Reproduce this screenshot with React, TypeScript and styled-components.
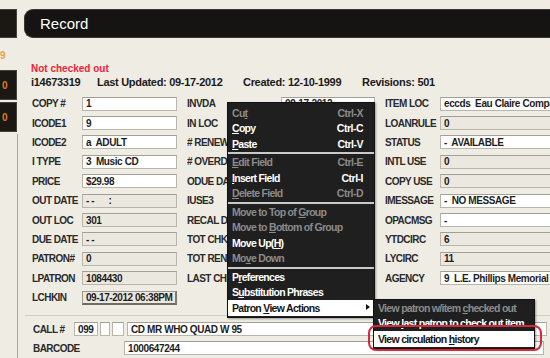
import React from "react";
import styled, { createGlobalStyle } from "styled-components";

const GlobalStyle = createGlobalStyle`
  html, body {
    margin: 0;
    padding: 0;
  }
  body {
    width: 550px;
    height: 358px;
    overflow: hidden;
    background: #efece4;
    font-family: "Liberation Sans", Arial, sans-serif;
  }
`;

const sans = `"Liberation Sans", Arial, sans-serif`;

const Screen = styled.div`
  position: relative;
  display: flex;
  width: 550px;
  height: 358px;
  overflow: hidden;
  background: #efece4;
`;

const Sidebar = styled.aside`
  width: 18px;
  flex: none;
  display: flex;
  flex-direction: column;
  padding-top: 9px;
  box-sizing: border-box;
`;

const SideTile = styled.div<{ $h: number }>`
  height: ${(p) => p.$h}px;
  width: 17px;
  box-sizing: border-box;
  margin-bottom: 2px;
  padding-left: 2px;
  display: flex;
  align-items: center;
  background: #1b1713;
  border: 1px solid #45413b;
  border-left: none;
  color: #dc7d1c;
  font: bold 10px ${sans};
`;

const SideCount = styled.div`
  height: 30px;
  display: flex;
  align-items: center;
  color: #eaa04c;
  font: bold 10px ${sans};
`;

const SideRest = styled.div`
  flex: 1;
  width: 17px;
  border-right: 1px solid #aaa69c;
`;

const Main = styled.main`
  flex: 1;
  min-width: 0;
  display: flex;
  flex-direction: column;
  padding: 9px 0 0 6px;
`;

const Header = styled.header`
  height: 29px;
  flex: none;
  display: flex;
  align-items: center;
  padding-left: 15px;
  background: #151412;
  border: 1px solid #3a3733;
  border-right: none;
  border-radius: 9px 0 0 9px;
  box-sizing: border-box;
  color: #fff;
  font: 15px ${sans};
`;

const Content = styled.section`
  padding: 24px 0 0 7px;
  display: flex;
  flex-direction: column;
`;

const Status = styled.div`
  height: 13px;
  color: #ee1f3b;
  font: bold 10px/13px ${sans};
`;

const MetaLine = styled.div`
  display: flex;
  height: 14px;
  color: #1b1b1b;
  font: bold 11px/14px ${sans};
  letter-spacing: -0.3px;
  white-space: nowrap;
`;

const MetaItem = styled.span<{ $w?: number }>`
  ${(p) => (p.$w ? `width: ${p.$w}px; flex: none;` : "")}
`;

const FormGrid = styled.div`
  display: flex;
  gap: 10px;
  margin-top: 5px;
  padding-left: 1px;
`;

const Column = styled.div<{ $w: number }>`
  width: ${(p) => p.$w}px;
  flex: none;
  display: flex;
  flex-direction: column;
`;

const FieldRow = styled.div<{ $label: number }>`
  height: 19.4px;
  display: grid;
  grid-template-columns: ${(p) => p.$label}px 1fr;
  align-items: center;
`;

const Label = styled.span`
  color: #2a2a2a;
  font: bold 10px ${sans};
  letter-spacing: -0.55px;
  white-space: nowrap;
  overflow: hidden;
`;

type BoxKind = "edit" | "read" | "stamp";

const Box = styled.div<{ $kind?: BoxKind; $w?: number }>`
  height: 14px;
  box-sizing: border-box;
  ${(p) => (p.$w ? `width: ${p.$w}px; flex: none;` : "")}
  padding: 0 3px;
  display: flex;
  align-items: center;
  background: ${(p) => (p.$kind === "edit" ? "#ffffff" : "#ebe8e0")};
  border: 1px solid #b8b5ac;
  border-top-color: #a29f97;
  ${(p) =>
    p.$kind === "stamp"
      ? "border-color: #9c998f #7d7a72 #6f6c65 #9c998f; border-width: 1px 2px 2px 1px;"
      : ""}
  color: #1d1d1d;
  font: bold 10px ${sans};
  letter-spacing: ${(p) => (p.$kind === "stamp" ? "-0.45px" : "-0.4px")};
  white-space: pre;
  overflow: hidden;
`;

const BottomSection = styled.div`
  margin-top: 8px;
  margin-left: -6px;
  padding: 6px 0 0 8px;
  border-top: 1px solid #cfcbc1;
  display: flex;
  flex-direction: column;
  gap: 5px;
`;

const InlineRow = styled.div`
  display: flex;
  align-items: center;
  gap: 2px;
`;

const InlineLabel = styled(Label)<{ $w: number }>`
  width: ${(p) => p.$w}px;
  flex: none;
`;

const Menu = styled.div<{ $left: number; $top: number; $w: number; $pad: number }>`
  position: absolute;
  left: ${(p) => p.$left}px;
  top: ${(p) => p.$top}px;
  width: ${(p) => p.$w}px;
  box-sizing: border-box;
  padding: ${(p) => p.$pad}px 0 1px;
  background: #1f1f1f;
  border: 1px solid #111;
  box-shadow: 1px 1px 2px rgba(0, 0, 0, 0.35);
`;

const MenuItem = styled.div<{ $disabled?: boolean; $active?: boolean }>`
  position: relative;
  height: 15.5px;
  display: flex;
  align-items: center;
  justify-content: space-between;
  padding: 0 11px 0 4px;
  background: ${(p) => (p.$active ? "#ffffff" : "transparent")};
  color: ${(p) => (p.$active ? "#151515" : p.$disabled ? "#8b8b8b" : "#ffffff")};
  font: bold 10.5px ${sans};
  letter-spacing: -0.7px;
  white-space: nowrap;
  u {
    text-underline-offset: 1px;
  }
`;

const Shortcut = styled.span`
  letter-spacing: -0.5px;
`;

const Separator = styled.div`
  height: 2px;
  margin: 0.5px 0;
  background: #c9c9c9;
`;

const Arrow = styled.span`
  position: absolute;
  right: 4px;
  top: 4px;
  width: 0;
  height: 0;
  border-top: 3.5px solid transparent;
  border-bottom: 3.5px solid transparent;
  border-left: 4px solid #111;
`;

const Callout = styled.div`
  position: absolute;
  left: 368px;
  top: 325px;
  width: 174px;
  height: 26px;
  box-sizing: border-box;
  border: 2px solid #d52a3b;
  border-radius: 8px;
  pointer-events: none;
`;

type Field = { label: string; value: string; kind: BoxKind };

const col1: Field[] = [
  { label: "COPY #", value: "1", kind: "edit" },
  { label: "ICODE1", value: "9", kind: "edit" },
  { label: "ICODE2", value: "a  ADULT", kind: "edit" },
  { label: "I TYPE", value: "3  Music CD", kind: "edit" },
  { label: "PRICE", value: "$29.98", kind: "edit" },
  { label: "OUT DATE", value: "- -      :", kind: "read" },
  { label: "OUT LOC", value: "301", kind: "read" },
  { label: "DUE DATE", value: "- -", kind: "read" },
  { label: "PATRON#", value: "0", kind: "read" },
  { label: "LPATRON", value: "1084430", kind: "read" },
  { label: "LCHKIN", value: "09-17-2012 06:38PM", kind: "stamp" },
];

const col2: Field[] = [
  { label: "INVDA", value: "09-17-2012", kind: "edit" },
  { label: "IN LOC", value: "0", kind: "read" },
  { label: "# RENEWALS", value: "0", kind: "read" },
  { label: "# OVERDUE", value: "0", kind: "read" },
  { label: "ODUE DATE", value: "- -", kind: "read" },
  { label: "IUSE3", value: "0", kind: "read" },
  { label: "RECAL DATE", value: "- -", kind: "read" },
  { label: "TOT CHKOUT", value: "11", kind: "read" },
  { label: "TOT RENEW", value: "0", kind: "read" },
  { label: "LAST CHKIN", value: "09-17-2012", kind: "read" },
];

const col3: Field[] = [
  { label: "ITEM LOC", value: "eccds  Eau Claire Compact Disc", kind: "edit" },
  { label: "LOANRULE", value: "0", kind: "read" },
  { label: "STATUS", value: "-  AVAILABLE", kind: "edit" },
  { label: "INTL USE", value: "0", kind: "read" },
  { label: "COPY USE", value: "0", kind: "read" },
  { label: "IMESSAGE", value: "-  NO MESSAGE", kind: "edit" },
  { label: "OPACMSG", value: "-", kind: "edit" },
  { label: "YTDCIRC", value: "6", kind: "read" },
  { label: "LYCIRC", value: "11", kind: "read" },
  { label: "AGENCY", value: "9  L.E. Phillips Memorial Public Library", kind: "edit" },
];

function FieldColumn({ fields, width, label }: { fields: Field[]; width: number; label: number }) {
  return (
    <Column $w={width}>
      {fields.map((f) => (
        <FieldRow key={f.label} $label={label}>
          <Label>{f.label}</Label>
          <Box $kind={f.kind}>{f.value}</Box>
        </FieldRow>
      ))}
    </Column>
  );
}

export default function App() {
  return (
    <>
      <GlobalStyle />
      <Screen>
        <Sidebar>
          <SideTile $h={29} />
          <SideCount>9</SideCount>
          <SideTile $h={30}>0</SideTile>
          <SideTile $h={30}>0</SideTile>
          <SideRest />
        </Sidebar>

        <Main>
          <Header>Record</Header>
          <Content>
            <Status>Not checked out</Status>
            <MetaLine>
              <MetaItem $w={66}>i14673319</MetaItem>
              <MetaItem $w={146}>Last Updated: 09-17-2012</MetaItem>
              <MetaItem $w={119}>Created: 12-10-1999</MetaItem>
              <MetaItem>Revisions: 501</MetaItem>
            </MetaLine>

            <FormGrid>
              <FieldColumn fields={col1} width={145} label={50} />
              <FieldColumn fields={col2} width={188} label={94} />
              <FieldColumn fields={col3} width={200} label={55} />
            </FormGrid>

            <BottomSection>
              <InlineRow>
                <InlineLabel $w={39}>CALL #</InlineLabel>
                <Box $kind="edit" $w={24}>099</Box>
                <Box $kind="edit" $w={10} />
                <Box $kind="edit" $w={12} />
                <Box $kind="edit" $w={420} style={{ marginLeft: 1 }}>
                  CD MR WHO QUAD W 95
                </Box>
              </InlineRow>
              <InlineRow>
                <InlineLabel $w={89}>BARCODE</InlineLabel>
                <Box $kind="edit" $w={420}>1000647244</Box>
              </InlineRow>
            </BottomSection>
          </Content>
        </Main>

        <Menu $left={227} $top={102} $w={148} $pad={2}>
          <MenuItem $disabled>
            <span>Cu<u>t</u></span>
            <Shortcut>Ctrl-X</Shortcut>
          </MenuItem>
          <MenuItem>
            <span><u>C</u>opy</span>
            <Shortcut>Ctrl-C</Shortcut>
          </MenuItem>
          <MenuItem>
            <span><u>P</u>aste</span>
            <Shortcut>Ctrl-V</Shortcut>
          </MenuItem>
          <Separator />
          <MenuItem $disabled>
            <span><u>E</u>dit Field</span>
            <Shortcut>Ctrl-E</Shortcut>
          </MenuItem>
          <MenuItem>
            <span><u>I</u>nsert Field</span>
            <Shortcut>Ctrl-I</Shortcut>
          </MenuItem>
          <MenuItem $disabled>
            <span><u>D</u>elete Field</span>
            <Shortcut>Ctrl-D</Shortcut>
          </MenuItem>
          <Separator />
          <MenuItem $disabled>
            <span>Move to Top of <u>G</u>roup</span>
          </MenuItem>
          <MenuItem $disabled>
            <span>Move to <u>B</u>ottom of Group</span>
          </MenuItem>
          <MenuItem>
            <span>Move Up(<u>H</u>)</span>
          </MenuItem>
          <MenuItem $disabled>
            <span>Mo<u>v</u>e Down</span>
          </MenuItem>
          <Separator />
          <MenuItem>
            <span>P<u>r</u>eferences</span>
          </MenuItem>
          <MenuItem>
            <span>S<u>u</u>bstitution Phrases</span>
          </MenuItem>
          <MenuItem $active>
            <span>Patron <u>V</u>iew Actions</span>
            <Arrow />
          </MenuItem>
        </Menu>

        <Menu $left={373} $top={299} $w={162} $pad={0}>
          <MenuItem $disabled>
            <span>View patron w/item <u>c</u>hecked out</span>
          </MenuItem>
          <MenuItem>
            <span>View <u>l</u>ast patron to check out item</span>
          </MenuItem>
          <MenuItem $active>
            <span>View circulation <u>h</u>istory</span>
          </MenuItem>
        </Menu>
        <Callout />
      </Screen>
    </>
  );
}
